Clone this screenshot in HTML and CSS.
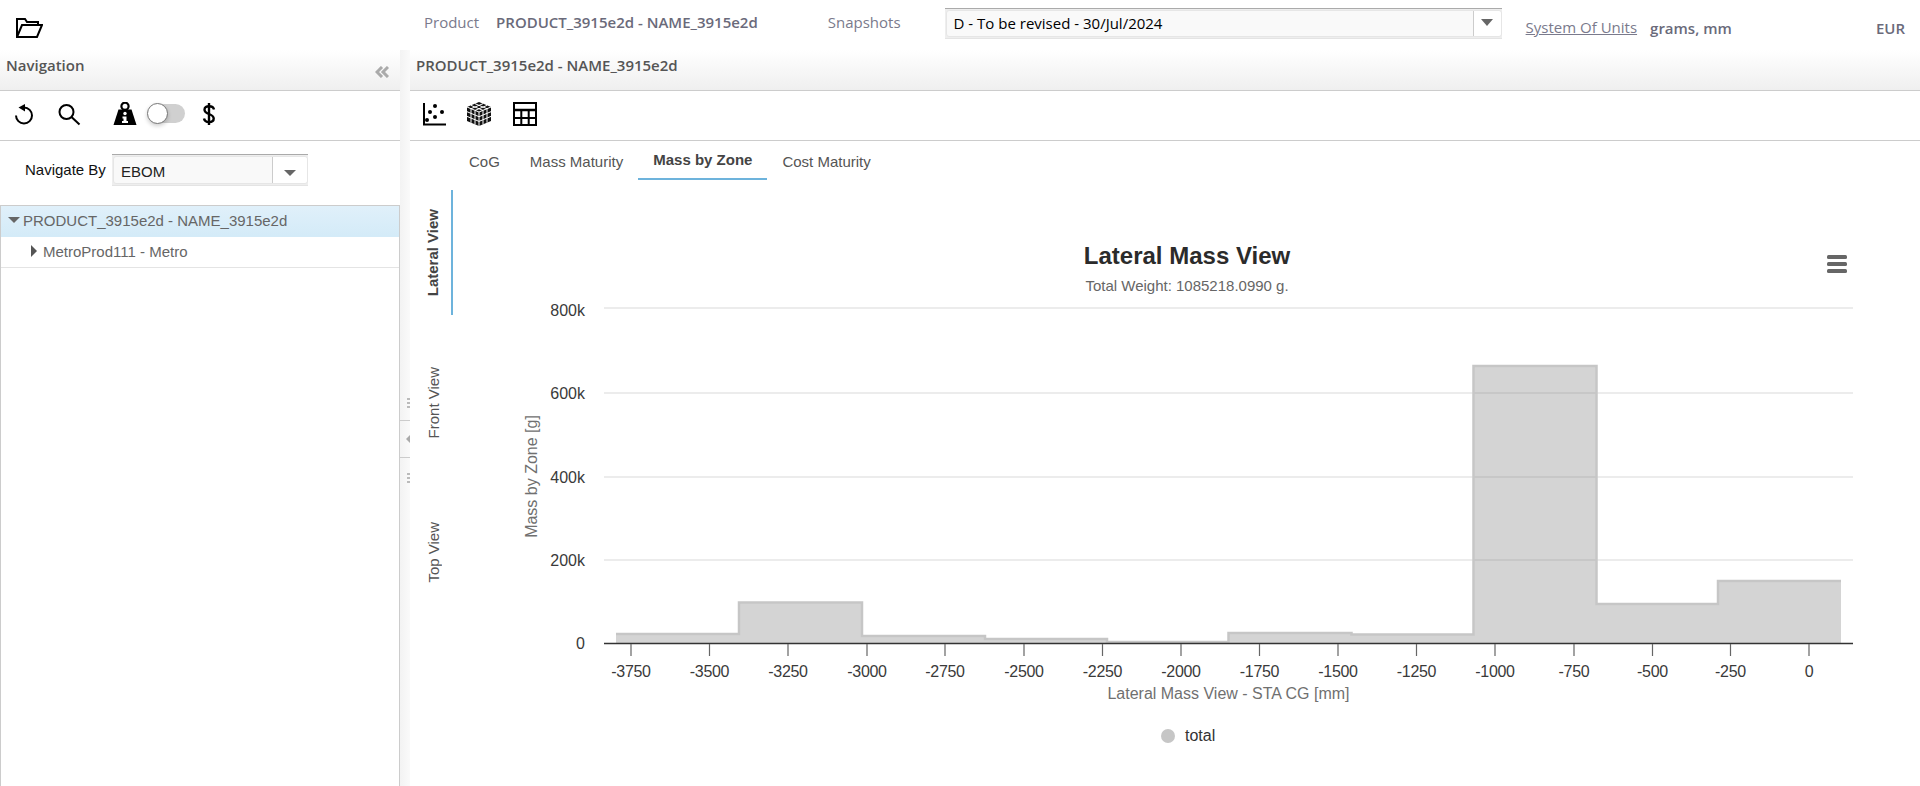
FILE: index.html
```html
<!DOCTYPE html>
<html lang="en">
<head>
    <meta charset="UTF-8">
    <title>Mass by Zone</title>
    <link rel="stylesheet" href="styles.css">
</head>
<body>
    <header class="topbar">
        <svg class="folder-icon" width="27" height="20" viewBox="0 0 27 20" fill="none" stroke="#000" stroke-width="2">
            <path d="M1 19V1H9L11 4H22V7"/>
            <path d="M1 19H21L26 7H6Z"/>
        </svg>
        <span class="top-label product-label">Product</span>
        <span class="top-value product-value">PRODUCT_3915e2d - NAME_3915e2d</span>
        <span class="top-label snapshots-label">Snapshots</span>
        <div class="select snapshot-select">
            <div class="select-inner">
                <span class="select-text open-text">D - To be revised - 30/Jul/2024</span>
                <span class="select-btn"><i class="caret"></i></span>
            </div>
        </div>
        <a class="units-link" href="#">System Of Units</a>
        <span class="top-value units-value">grams, mm</span>
        <span class="top-value currency">EUR</span>
    </header>

    <div class="app">
        <aside class="nav">
            <div class="panel-head">
                <span>Navigation</span>
                <svg class="collapse-icon" width="14" height="12" viewBox="0 0 14 12" fill="none" stroke="#aaa" stroke-width="3">
                    <path d="M7 1L2 6L7 11"/>
                    <path d="M13 1L8 6L13 11"/>
                </svg>
            </div>
            <div class="toolbar nav-tools">
                <svg class="tool" viewBox="0 0 24 24" fill="none" stroke="#000" stroke-width="2">
                    <path d="M12 5.5A8 8 0 1 1 4 13.5"/>
                    <polygon points="6.5,5.5 13,2 13,9.5" fill="#000" stroke="none"/>
                </svg>
                <svg class="tool tool-search" viewBox="0 0 24 24" fill="none" stroke="#000" stroke-width="2">
                    <circle cx="9.5" cy="10" r="7"/>
                    <path d="M14.5 15L22.5 22.5"/>
                </svg>
                <svg class="tool tool-weight" viewBox="0 0 24 24">
                    <circle cx="12" cy="4.2" r="3.6" fill="none" stroke="#000" stroke-width="2.2"/>
                    <path d="M5.5 7.5H18.5L23.5 23H0.5Z" fill="#000"/>
                    <circle cx="12" cy="11.5" r="1.7" fill="#fff"/>
                    <path d="M9.5 14.5H13.5V19H15V21H9V19H10.5V16.5H9.5Z" fill="#fff"/>
                </svg>
                <div class="toggle"><span class="toggle-knob"></span></div>
                <svg class="dollar" width="14" height="24" viewBox="0 0 14 24" fill="none" stroke="#000" stroke-width="2.4">
                    <path d="M12 7.5C11.5 5 9.5 4.2 7 4.2C4.5 4.2 2.5 5.4 2.5 7.7C2.5 10 4.5 11 7 12C9.5 13 11.7 14 11.7 16.4C11.7 18.8 9.5 20 7 20C4.5 20 2.5 19 2 16.5"/>
                    <path d="M7 1V23"/>
                </svg>
            </div>
            <div class="navigate-row">
                <label class="navigate-label">Navigate By</label>
                <div class="select navigate-select">
                    <div class="select-inner">
                        <span class="select-text">EBOM</span>
                        <span class="select-btn select-btn-wide"><i class="caret caret-low"></i></span>
                    </div>
                </div>
            </div>
            <div class="tree">
                <div class="tree-row tree-row-selected">
                    <i class="tree-open"></i>
                    <span>PRODUCT_3915e2d - NAME_3915e2d</span>
                </div>
                <div class="tree-row tree-row-child">
                    <i class="tree-closed"></i>
                    <span>MetroProd111 - Metro</span>
                </div>
            </div>
        </aside>

        <div class="splitter">
            <span class="grip"></span>
            <span class="split-btn"><i class="split-arrow"></i></span>
            <span class="grip"></span>
        </div>

        <main class="main">
            <div class="panel-head main-head">
                <span>PRODUCT_3915e2d - NAME_3915e2d</span>
            </div>
            <div class="toolbar main-tools">
                <svg class="tool" viewBox="0 0 24 24" fill="#000">
                    <path d="M2 1V22.5H24" fill="none" stroke="#000" stroke-width="2"/>
                    <circle cx="13" cy="4" r="2"/>
                    <circle cx="8" cy="10" r="2"/>
                    <circle cx="20" cy="10" r="2"/>
                    <circle cx="13" cy="15" r="2"/>
                    <circle cx="5" cy="18" r="2"/>
                </svg>
                <svg class="tool tool-cube" width="26" height="26" viewBox="0 0 26 26">
                    <polygon points="13,1 25,6 25,20 13,25 1,20 1,6" fill="#111"/>
                    <g fill="none" stroke="#fff" stroke-width="1">
                        <path d="M1 6L13 11L25 6"/>
                        <path d="M13 11V25"/>
                        <path d="M5 4.4L17 9.4M9 2.7L21 7.7M21 4.4L9 9.4M17 2.7L5 7.7"/>
                        <path d="M5 7.7V21.7M9 9.4V23.4M17 9.4V23.4M21 7.7V21.7"/>
                        <path d="M1 10.7L13 15.7L25 10.7M1 15.4L13 20.4L25 15.4"/>
                    </g>
                </svg>
                <svg class="tool tool-table" viewBox="0 0 24 24" fill="none" stroke="#000" stroke-width="2">
                    <rect x="1" y="1" width="22" height="22"/>
                    <path d="M1 8H23" stroke-width="2.5"/>
                    <path d="M1 16H23M8.3 8V23M15.7 8V23"/>
                </svg>
            </div>
            <nav class="tabs">
                <a class="tab" href="#">CoG</a>
                <a class="tab" href="#">Mass Maturity</a>
                <a class="tab tab-active" href="#">Mass by Zone</a>
                <a class="tab" href="#">Cost Maturity</a>
            </nav>
            <div class="content">
                <div class="vtabs">
                    <a class="vtab vtab-active" href="#"><span>Lateral View</span></a>
                    <a class="vtab" href="#"><span>Front View</span></a>
                    <a class="vtab" href="#"><span>Top View</span></a>
                </div>
                <svg class="chart" viewBox="453 180 1467 606" width="1467" height="606">
                    <text class="chart-title" x="1187" y="264" text-anchor="middle">Lateral Mass View</text>
                    <text class="chart-subtitle" x="1187" y="291" text-anchor="middle">Total Weight: 1085218.0990 g.</text>

                    <g fill="#666">
                        <rect x="1827" y="255" width="20" height="4" rx="1.5"/>
                        <rect x="1827" y="262" width="20" height="4" rx="1.5"/>
                        <rect x="1827" y="269" width="20" height="4" rx="1.5"/>
                    </g>

                    <g stroke="#e6e6e6" stroke-width="1.5">
                        <path d="M604 308H1853M604 393H1853M604 477H1853M604 560H1853"/>
                    </g>

                    <g class="axis-text" text-anchor="end">
                        <text x="585" y="316">800k</text>
                        <text x="585" y="399">600k</text>
                        <text x="585" y="483">400k</text>
                        <text x="585" y="566">200k</text>
                        <text x="585" y="649">0</text>
                    </g>

                    <path fill="rgba(120,120,120,0.32)" d="M616 644V634H739V602.5H862V636H985V639H1107V642H1228.5V633H1351.5V634.5H1473.5V366H1596.5V604H1718V581H1841V644Z"/>
                    <path fill="none" stroke="#c6c6c6" stroke-width="2.5" d="M616 634H739V602.5H862V636H985V639H1107V642H1228.5V633H1351.5V634.5H1473.5V366H1596.5V604H1718V581H1841"/>

                    <path d="M604 643.5H1853" stroke="#333" stroke-width="1.5"/>
                    <path stroke="#666" stroke-width="1.2" d="M631 644V656M709.5 644V656M788 644V656M867 644V656M945 644V656M1024 644V656M1102.5 644V656M1181 644V656M1259.5 644V656M1338 644V656M1416.5 644V656M1495 644V656M1574 644V656M1652.5 644V656M1730.5 644V656M1809 644V656"/>

                    <g class="axis-text tick-text" text-anchor="middle">
                        <text x="631" y="677">-3750</text>
                        <text x="709.5" y="677">-3500</text>
                        <text x="788" y="677">-3250</text>
                        <text x="867" y="677">-3000</text>
                        <text x="945" y="677">-2750</text>
                        <text x="1024" y="677">-2500</text>
                        <text x="1102.5" y="677">-2250</text>
                        <text x="1181" y="677">-2000</text>
                        <text x="1259.5" y="677">-1750</text>
                        <text x="1338" y="677">-1500</text>
                        <text x="1416.5" y="677">-1250</text>
                        <text x="1495" y="677">-1000</text>
                        <text x="1574" y="677">-750</text>
                        <text x="1652.5" y="677">-500</text>
                        <text x="1730.5" y="677">-250</text>
                        <text x="1809" y="677">0</text>
                    </g>

                    <text class="axis-title" x="1228.5" y="699" text-anchor="middle">Lateral Mass View - STA CG [mm]</text>
                    <text class="axis-title" transform="translate(537 476.5) rotate(-90)" text-anchor="middle">Mass by Zone [g]</text>

                    <circle cx="1168" cy="736" r="7" fill="#c6c6c6"/>
                    <text class="legend-text" x="1185" y="741">total</text>
                </svg>
            </div>
        </main>
    </div>
</body>
</html>
```

FILE: styles.css
```css
:root {
    --line-color: #cccccc;
    --head-text: #555555;
    --muted-text: #7a7a8c;
    --accent-color: #6db3dc;
}

* {
    box-sizing: border-box;
}

html, body {
    height: 100%;
}

body {
    margin: 0;
    overflow: hidden;
    background-color: #ffffff;
    font-family: "Liberation Sans", Arial, sans-serif;
    font-size: 15px;
    color: #333333;
}

a {
    text-decoration: none;
    color: inherit;
}

/* top bar */
.topbar {
    display: flex;
    align-items: flex-start;
    height: 50px;
    padding-top: 8px;
    font-family: "Open Sans", sans-serif;
}

.folder-icon {
    margin: 10px 0 0 16px;
}

.top-label {
    margin-top: 4px;
    color: var(--muted-text);
}

.top-value {
    margin-top: 4px;
    font-weight: 600;
    color: #6a6a7a;
}

.product-label {
    margin-left: 381px;
}

.product-value {
    margin-left: 17px;
}

.snapshots-label {
    margin-left: 70px;
}

.select {
    background-color: #eeeeee;
    border-top: 1px solid #aaaaaa;
    border-bottom: 1px solid #e4e4e4;
    padding: 1px 0 1px 1px;
}

.select-inner {
    display: flex;
    align-items: stretch;
    height: 100%;
    background-color: #f9f9f9;
    border: 1px solid #e6e6e6;
    border-radius: 3px;
}

.select-text {
    flex: 1;
    padding: 2px 0 0 7px;
    color: #000;
}

.open-text {
    font-family: "Open Sans", sans-serif;
}

.select-btn {
    display: flex;
    justify-content: center;
    flex-shrink: 0;
    width: 28px;
    padding-top: 8px;
    background-color: #ffffff;
    border-left: 1px solid #cccccc;
    border-radius: 0 3px 3px 0;
}

.select-btn-wide {
    width: 35px;
    padding-top: 13px;
}

.caret {
    width: 0;
    height: 0;
    border-left: 6px solid transparent;
    border-right: 6px solid transparent;
    border-top: 7px solid #666666;
}

.caret-low {
    border-top-width: 6px;
}

.snapshot-select {
    flex-shrink: 0;
    width: 557px;
    height: 31px;
    margin-left: 44px;
}

.units-link {
    margin: 9px 0 0 24px;
    color: var(--muted-text);
    text-decoration: underline;
}

.units-value {
    margin: 10px 0 0 13px;
}

.currency {
    margin: 10px 0 0 auto;
    padding-right: 15px;
}

/* panels */
.app {
    display: flex;
    height: calc(100% - 50px);
}

.nav {
    display: flex;
    flex-direction: column;
    width: 400px;
}

.panel-head {
    display: flex;
    justify-content: space-between;
    height: 41px;
    padding: 5px 11px 0 6px;
    background: linear-gradient(#ffffff, #efefef);
    border-bottom: 1px solid var(--line-color);
    font-family: "Open Sans", sans-serif;
    font-weight: 600;
    color: var(--head-text);
}

.collapse-icon {
    margin-top: 11px;
}

.toolbar {
    display: flex;
    align-items: center;
    height: 50px;
    padding-bottom: 4px;
    padding-left: 12px;
    border-bottom: 1px solid var(--line-color);
}

.tool {
    width: 24px;
    height: 24px;
    flex-shrink: 0;
}

.tool-search {
    margin-left: 21px;
}

.tool-weight {
    margin-left: 32px;
}

.tool-cube {
    width: 26px;
    height: 26px;
    margin-left: 20px;
}

.tool-table {
    margin-left: 21px;
}

.toggle {
    position: relative;
    width: 35px;
    height: 19px;
    margin-left: 13px;
    background-color: #d0d0d0;
    border-radius: 10px;
}

.toggle-knob {
    position: absolute;
    left: -3px;
    top: -1px;
    width: 21px;
    height: 21px;
    background-color: #ffffff;
    border: 1px solid #777777;
    border-radius: 50%;
    box-shadow: 0 2px 4px rgba(0, 0, 0, 0.2);
}

.dollar {
    margin-left: 17px;
}

.navigate-row {
    display: flex;
    height: 64px;
    padding: 13px 0 0 25px;
}

.navigate-label {
    width: 87px;
    padding-top: 7px;
    color: #111111;
}

.navigate-select {
    width: 196px;
    height: 32px;
}

.navigate-select .select-text {
    padding-left: 7px;
    padding-top: 6px;
    color: #222222;
}

.tree {
    flex: 1;
    border: 1px solid var(--line-color);
    border-bottom: none;
}

.tree-row {
    display: flex;
    align-items: center;
    height: 31px;
    padding-bottom: 2px;
    color: #666666;
    border-bottom: 1px solid #e4e4e4;
}

.tree-row-selected {
    padding-left: 7px;
    background: linear-gradient(#e0f0fa, #d4ebf8);
    border-bottom-color: #d4ebf8;
}

.tree-row-child {
    padding-left: 30px;
}

.tree-open {
    width: 0;
    height: 0;
    margin-right: 3px;
    border-left: 6px solid transparent;
    border-right: 6px solid transparent;
    border-top: 6px solid #666666;
}

.tree-closed {
    width: 0;
    height: 0;
    margin-right: 6px;
    border-top: 6px solid transparent;
    border-bottom: 6px solid transparent;
    border-left: 6px solid #555555;
}

/* splitter between the panels */
.splitter {
    display: flex;
    flex-direction: column;
    align-items: flex-end;
    width: 10px;
    padding-top: 348px;
    background: linear-gradient(90deg, #f3f3f3, #fafafa);
}

.grip {
    width: 3px;
    height: 10px;
    background: repeating-linear-gradient(#bbbbbb 0, #bbbbbb 2px, transparent 2px, transparent 4px);
}

.split-btn {
    display: flex;
    align-items: center;
    justify-content: flex-end;
    width: 10px;
    height: 38px;
    margin: 12px 0 15px;
    border-top: 1px solid var(--line-color);
    border-bottom: 1px solid var(--line-color);
}

.split-arrow {
    width: 0;
    height: 0;
    border-top: 4px solid transparent;
    border-bottom: 4px solid transparent;
    border-right: 4px solid #aaaaaa;
}

.main {
    display: flex;
    flex-direction: column;
    flex: 1;
    min-width: 0;
}

/* tabs */
.tabs {
    display: flex;
    height: 39px;
    padding-left: 44px;
}

.tab {
    height: 39px;
    padding: 12px 15px 0;
    color: #555555;
}

.tab-active {
    padding-top: 10px;
    font-weight: 700;
    color: #444444;
    border-bottom: 2px solid var(--accent-color);
}

.content {
    display: flex;
    flex: 1;
    min-height: 0;
}

.vtabs {
    flex-shrink: 0;
    width: 43px;
    padding-top: 10px;
}

.vtab {
    display: flex;
    align-items: center;
    justify-content: center;
    height: 125px;
    margin-bottom: 25px;
    padding-left: 4px;
    color: #555555;
}

.vtab span {
    writing-mode: vertical-rl;
    transform: rotate(180deg);
}

.vtab-active {
    border-right: 2px solid var(--accent-color);
    font-weight: 700;
    color: #444444;
}

/* chart */
.chart {
    display: block;
    flex-shrink: 0;
}

.chart-title {
    font-size: 24px;
    font-weight: 700;
    fill: #2b2b2b;
}

.chart-subtitle {
    font-size: 15px;
    fill: #666666;
}

.axis-text {
    font-size: 16px;
    fill: #3a3a3a;
}

.tick-text {
    letter-spacing: -0.3px;
}

.axis-title {
    font-size: 16px;
    fill: #707070;
}

.legend-text {
    font-size: 16px;
    fill: #333333;
}
```
